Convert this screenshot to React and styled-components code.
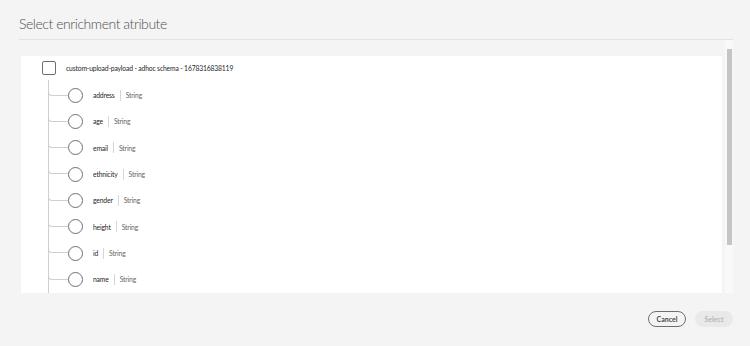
import styled, { createGlobalStyle } from "styled-components";

const GlobalStyle = createGlobalStyle`
  html, body {
    margin: 0;
    padding: 0;
    background: #f4f4f4;
  }
  body {
    font-family: Lato, "Liberation Sans", sans-serif;
    color: #4b4b4b;
  }
  * {
    box-sizing: border-box;
  }
`;

const Dialog = styled.div`
  height: 346px;
  display: flex;
  flex-direction: column;
  padding: 0 17px 0 19px;
`;

const Header = styled.div`
  height: 40px;
  padding-top: 15px;
  border-bottom: 1px solid #e2e2e2;
`;

const Title = styled.h1`
  margin: 0;
  font-size: 14px;
  line-height: 18px;
  font-weight: 300;
  letter-spacing: -0.45px;
  color: #505050;
`;

const ScrollFrame = styled.div`
  height: 253px;
  display: flex;
`;

const Viewport = styled.div`
  flex: 1;
  overflow: hidden;
  padding: 16px 3px 0 2px;
`;

const ScrollTrack = styled.div`
  width: 8px;
  padding: 9px 1px 0 2px;
  background: #f9f9f9;
`;

const ScrollThumb = styled.div`
  height: 196px;
  background: #c4c4c4;
`;

const Panel = styled.div`
  background: #ffffff;
  padding: 0 0 0 21px;
  height: 100%;
`;

const RootRow = styled.div`
  height: 24px;
  display: flex;
  align-items: center;
`;

const Checkbox = styled.span`
  width: 14px;
  height: 14px;
  border: 1.5px solid #6f6f6f;
  border-radius: 2px;
  flex-shrink: 0;
`;

const Label = styled.span`
  font-size: 6.8px;
  letter-spacing: -0.17px;
  color: ${(p) => (p.$muted ? "#666666" : "#1f1f1f")};
  margin-left: ${(p) => (p.$muted ? "0" : "10px")};
`;

const ChildList = styled.ul`
  list-style: none;
  margin: 0 0 0 6px;
  padding: 2px 0 40px;
  border-left: 1px solid #cfcfcf;
`;

const ChildRow = styled.li`
  height: 26.33px;
  display: flex;
  align-items: center;
`;

const Connector = styled.span`
  align-self: flex-start;
  width: 20px;
  height: 13.5px;
  margin-left: -1px;
  border-left: 1px solid #cfcfcf;
  border-bottom: 1px solid #cfcfcf;
  border-bottom-left-radius: 4px;
  flex-shrink: 0;
`;

const Radio = styled.span`
  width: 15px;
  height: 15px;
  border: 1.5px solid #6f6f6f;
  border-radius: 50%;
  flex-shrink: 0;
`;

const Divider = styled.span`
  width: 1px;
  height: 11px;
  margin: 0 5px;
  background: #d6d6d6;
`;

const Footer = styled.div`
  display: flex;
  justify-content: flex-end;
  gap: 9px;
  padding-top: 18px;
`;

const Button = styled.button`
  width: 38px;
  height: 16px;
  padding: 0;
  border-radius: 8px;
  font-family: Lato, "Liberation Sans", sans-serif;
  font-size: 7px;
  font-weight: 700;
  cursor: pointer;
  border: ${(p) => (p.$disabled ? "none" : "1.5px solid #6f6f6f")};
  background: ${(p) => (p.$disabled ? "#e9e9e9" : "transparent")};
  color: ${(p) => (p.$disabled ? "#b6b6b6" : "#4b4b4b")};
`;

const fields = ["address", "age", "email", "ethnicity", "gender", "height", "id", "name"];

export default function App() {
  return (
    <>
      <GlobalStyle />
      <Dialog>
        <Header>
          <Title>Select enrichment atribute</Title>
        </Header>
        <ScrollFrame>
          <Viewport>
            <Panel>
              <RootRow>
                <Checkbox />
                <Label>custom-upload-payload - adhoc schema - 1678316838119</Label>
              </RootRow>
              <ChildList>
                {fields.map((f) => (
                  <ChildRow key={f}>
                    <Connector />
                    <Radio />
                    <Label>{f}</Label>
                    <Divider />
                    <Label $muted>String</Label>
                  </ChildRow>
                ))}
              </ChildList>
            </Panel>
          </Viewport>
          <ScrollTrack>
            <ScrollThumb />
          </ScrollTrack>
        </ScrollFrame>
        <Footer>
          <Button>Cancel</Button>
          <Button $disabled>Select</Button>
        </Footer>
      </Dialog>
    </>
  );
}
